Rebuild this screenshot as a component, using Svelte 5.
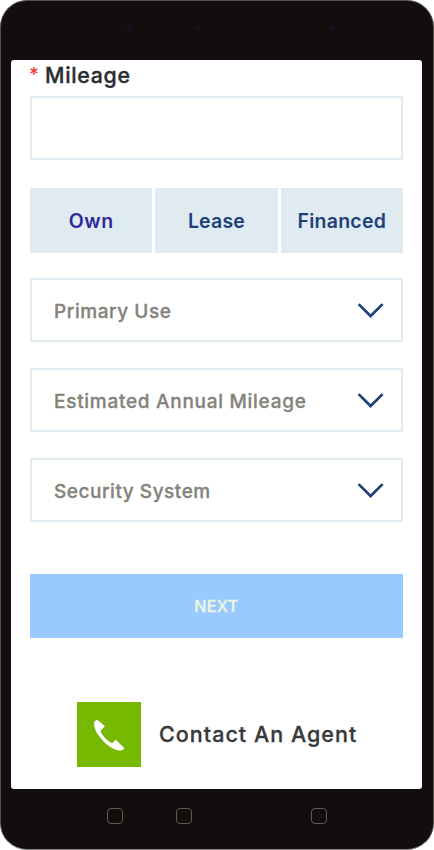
<script>
  const ownership = [
    { label: 'Own', spacing: 0.55 },
    { label: 'Lease', spacing: 0.2 },
    { label: 'Financed', spacing: 0.25 }
  ];
  const selects = [
    { label: 'Primary Use', spacing: 0.55 },
    { label: 'Estimated Annual Mileage', spacing: 0.72 },
    { label: 'Security System', spacing: 0.53 }
  ];
</script>

<div class="phone">
  <div class="top">
    <i></i><i></i><i></i>
  </div>
  <main>
    <label for="mileage"><span class="star">*</span><span class="name">Mileage</span></label>
    <input id="mileage" type="text" />
    <div class="tabs">
      {#each ownership as o, n}
        <button class:active={n === 0} style="letter-spacing:{o.spacing}px">{o.label}</button>
      {/each}
    </div>
    <div class="selects">
      {#each selects as s}
        <div class="select">
          <span style="letter-spacing:{s.spacing}px">{s.label}</span>
          <svg width="28" height="18" viewBox="0 0 28 18"><path d="M2.6 3.1 14.6 15 26.6 3.1" fill="none" stroke="#1d4178" stroke-width="2.7" /></svg>
        </div>
      {/each}
    </div>
    <button class="next">NEXT</button>
    <div class="contact">
      <div class="call">
        <svg width="64" height="65" viewBox="0 0 64 65"><path fill="#fff" d="M20.3 17.7C17.7 18.1 16.8 20.4 17.1 22.8C17.5 26.8 19 30 21.5 33.2C24.8 37.8 28.6 41.8 33 44.7C36.5 47.2 40 48.6 43.2 48.5C45.5 48.4 47.2 47.4 47.3 46L38.7 37.7L35.8 40.8C34.8 41.2 33.8 40.8 32.8 40C28.8 37.1 25.5 33.4 23.8 29.9C23.4 29 23.5 28.5 24.2 27.9L28 24.3Z" /></svg>
      </div>
      <span>Contact An Agent</span>
    </div>
  </main>
  <div class="bottom">
    <b></b><b></b><b></b>
  </div>
</div>

<style>
  :global(body) { background: #fff; }
  .phone {
    box-sizing: border-box;
    width: 434px;
    height: 850px;
    background: #130d0e;
    border: 1px solid #54514f;
    border-bottom-color: #8d8888;
    border-radius: 27px;
    padding: 0 11px 0 10px;
    overflow: hidden;
    font-family: Inter, "Liberation Sans", sans-serif;
    font-weight: 500;
    display: flex;
    flex-direction: column;
  }
  .top { height: 59px; flex: none; display: flex; padding: 24px 0 0 115px; box-sizing: border-box; gap: 64px; }
  .top i { width: 5px; height: 5px; border-radius: 50%; background: #15102a; }
  .top i:last-child { margin-left: 66px; }
  main {
    box-sizing: border-box;
    width: 411px;
    height: 729px;
    flex: none;
    background: #fff;
    border-radius: 3px;
    padding: 0 19px;
    display: flex;
    flex-direction: column;
  }
  label { height: 36px; flex: none; display: flex; line-height: 31px; font-size: 21px; color: #2b2c2e; }
  .star { width: 15px; color: #ef3439; font-size: 19px; line-height: 29px; text-indent: -1px; }
  .name { letter-spacing: 0.7px; font-size: 21.3px; -webkit-text-stroke: 0.35px currentColor; }
  input { box-sizing: border-box; width: 373px; height: 64px; border: 2px solid #e0ebf2; border-radius: 0; background: #fff; padding: 0 22px; font: inherit; outline: none; }
  button { border: 0; padding: 0; font: inherit; border-radius: 0; }
  .tabs { display: flex; gap: 3px; margin-top: 28px; height: 65px; flex: none; }
  .tabs button { flex: 1; background: #e0eaf1; color: #1d4178; font-size: 19.5px; font-weight: 600; }
  .tabs .active { color: #2c2b99; }
  .selects { display: flex; flex-direction: column; gap: 26px; margin-top: 25px; }
  .select { box-sizing: border-box; height: 64px; border: 2px solid #e0ebf2; padding: 0 17px 0 22px; display: flex; align-items: center; justify-content: space-between; font-size: 19px; color: #83837a; }
  .select span { padding-top: 2px; -webkit-text-stroke: 0.3px currentColor; }
  .next { margin-top: 52px; height: 64px; flex: none; background: #99caff; color: #edf6e4; font-size: 16px; letter-spacing: 0.4px; -webkit-text-stroke: 0.3px currentColor; }
  .contact { display: flex; align-items: center; gap: 18px; margin: 64px 0 0 47px; font-size: 21.5px; color: #38393b; }
  .contact span { letter-spacing: 1.02px; white-space: nowrap; padding-bottom: 2px; -webkit-text-stroke: 0.3px currentColor; }
  .call { width: 64px; height: 65px; background: #77b800; }
  .call svg { display: block; }
  .bottom { display: flex; padding: 19px 0 0 96px; }
  .bottom b { box-sizing: border-box; width: 16px; height: 16px; border: 1px solid #665855; border-radius: 4px; background: #130d0e; }
  .bottom b:nth-child(2) { margin-left: 53px; }
  .bottom b:nth-child(3) { margin-left: 119px; }
</style>
